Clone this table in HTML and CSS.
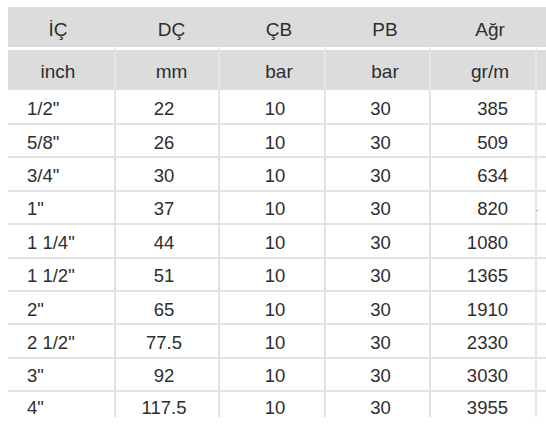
FILE: index.html
```html
<!DOCTYPE html>
<html lang="tr">
<head>
<meta charset="utf-8">
<title>Hortum Ölçüleri</title>
<link rel="stylesheet" href="styles.css">
</head>
<body>
<div class="frame">
  <div class="sheet">
    <div class="cell h1 c1">İÇ</div>
    <div class="cell h1 c2">DÇ</div>
    <div class="cell h1 c3">ÇB</div>
    <div class="cell h1 c4">PB</div>
    <div class="cell h1 c5">Ağr</div>
    <div class="cell h1 c6"></div>

    <div class="cell h2 c1">inch</div>
    <div class="cell h2 c2">mm</div>
    <div class="cell h2 c3">bar</div>
    <div class="cell h2 c4">bar</div>
    <div class="cell h2 c5">gr/m</div>
    <div class="cell h2 c6"></div>

    <div class="cell d c1">1/2"</div><div class="cell d c2">22</div><div class="cell d c3">10</div><div class="cell d c4">30</div><div class="cell d c5">385</div><div class="cell d c6"></div>
    <div class="cell d c1">5/8"</div><div class="cell d c2">26</div><div class="cell d c3">10</div><div class="cell d c4">30</div><div class="cell d c5">509</div><div class="cell d c6"></div>
    <div class="cell d c1">3/4"</div><div class="cell d c2">30</div><div class="cell d c3">10</div><div class="cell d c4">30</div><div class="cell d c5">634</div><div class="cell d c6"></div>
    <div class="cell d c1">1"</div><div class="cell d c2">37</div><div class="cell d c3">10</div><div class="cell d c4">30</div><div class="cell d c5">820</div><div class="cell d c6"><span class="tick">-</span></div>
    <div class="cell d c1">1 1/4"</div><div class="cell d c2">44</div><div class="cell d c3">10</div><div class="cell d c4">30</div><div class="cell d c5">1080</div><div class="cell d c6"></div>
    <div class="cell d c1">1 1/2"</div><div class="cell d c2">51</div><div class="cell d c3">10</div><div class="cell d c4">30</div><div class="cell d c5">1365</div><div class="cell d c6"></div>
    <div class="cell d c1">2"</div><div class="cell d c2">65</div><div class="cell d c3">10</div><div class="cell d c4">30</div><div class="cell d c5">1910</div><div class="cell d c6"></div>
    <div class="cell d c1">2 1/2"</div><div class="cell d c2">77.5</div><div class="cell d c3">10</div><div class="cell d c4">30</div><div class="cell d c5">2330</div><div class="cell d c6"></div>
    <div class="cell d c1">3"</div><div class="cell d c2">92</div><div class="cell d c3">10</div><div class="cell d c4">30</div><div class="cell d c5">3030</div><div class="cell d c6"></div>
    <div class="cell d last c1">4"</div><div class="cell d last c2">117.5</div><div class="cell d last c3">10</div><div class="cell d last c4">30</div><div class="cell d last c5">3955</div><div class="cell d last c6"></div>
  </div>
</div>
</body>
</html>
```

FILE: styles.css
```css
html, body {
  margin: 0;
  padding: 0;
  background: #ffffff;
}

.frame {
  padding: 7px 0 0 8px;
}

.sheet {
  display: grid;
  grid-template-columns: 108px 104px 106px 105px 106px 15px;
  grid-template-rows: 40px 43px 35px repeat(8, 33.4px) 25px;
  font-family: "Liberation Sans", Arial, Helvetica, sans-serif;
  color: #2e2e2e;
}

.cell {
  box-sizing: border-box;
  display: flex;
  align-items: center;
  white-space: nowrap;
}

.h1 {
  background: #dcdcdc;
  font-size: 19px;
  border-right: 2px solid #dcdcdc;
  justify-content: center;
  padding-top: 6px;
}

.h2 {
  background: #dcdcdc;
  font-size: 19px;
  border-top: 3px solid #ffffff;
  border-right: 2px solid #e6e6e6;
  justify-content: center;
  padding-top: 4px;
}

.d {
  font-size: 18.5px;
  border-bottom: 2px solid #e3e3e3;
  border-right: 2px solid #e3e3e3;
  padding-top: 4px;
}

.d.last {
  border-bottom: none;
  align-items: flex-start;
  padding-top: 6px;
  line-height: 20px;
}

.h1.c6, .h2.c6 { border-right: none; }

.h1.c1, .h2.c1 { padding-right: 6px; }
.h1.c2, .h2.c2 { padding-left: 9px; }
.h1.c3, .h2.c3 { padding-left: 14px; }
.h1.c4, .h2.c4 { padding-left: 15px; }
.h1.c5, .h2.c5 { padding-left: 14px; }

.d.c1 { padding-left: 19px; }
.d.c2 { justify-content: center; padding-right: 6px; }
.d.c3 { justify-content: center; padding-left: 6px; }
.d.c4 { justify-content: center; padding-left: 6px; }
.d.c5 { justify-content: flex-end; padding-right: 27px; }
.d.c6 { border-right: none; }

.tick {
  font-size: 8px;
  color: #777;
  margin-left: -1px;
}
```
